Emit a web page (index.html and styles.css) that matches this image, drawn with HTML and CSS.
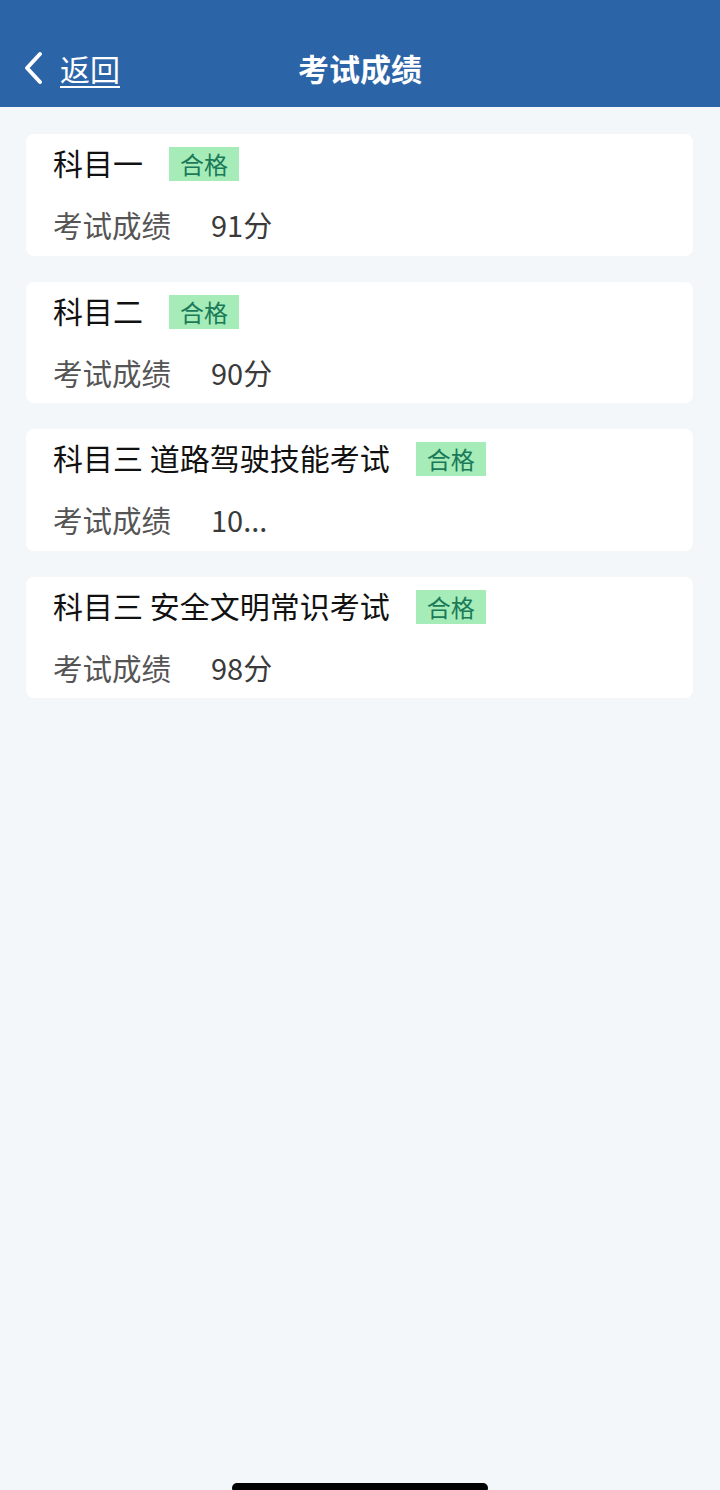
FILE: index.html
```html
<!DOCTYPE html>
<html lang="zh-CN">
<head>
    <meta charset="UTF-8">
    <meta name="viewport" content="width=device-width, initial-scale=1.0">
    <title>考试成绩</title>
    <link rel="stylesheet" href="styles.css">
</head>
<body>
    <!-- Top bar -->
    <header class="top-bar">
        <a href="#" class="back-link">
            <svg class="back-icon" width="22" height="34" viewBox="0 0 22 34">
                <path d="M18 3 L5 17 L18 31" fill="none" stroke="#fff" stroke-width="4" stroke-linecap="round" stroke-linejoin="round"/>
            </svg>
            <span class="back-text">返回</span>
        </a>
        <h1 class="page-title">考试成绩</h1>
    </header>

    <main class="score-list">
        <div class="score-card">
            <div class="card-head">
                <span class="subject">科目一</span>
                <span class="pass-tag">合格</span>
            </div>
            <div class="card-row">
                <span class="row-label">考试成绩</span>
                <span class="row-value">91分</span>
            </div>
        </div>

        <div class="score-card">
            <div class="card-head">
                <span class="subject">科目二</span>
                <span class="pass-tag">合格</span>
            </div>
            <div class="card-row">
                <span class="row-label">考试成绩</span>
                <span class="row-value">90分</span>
            </div>
        </div>

        <div class="score-card">
            <div class="card-head">
                <span class="subject">科目三 道路驾驶技能考试</span>
                <span class="pass-tag">合格</span>
            </div>
            <div class="card-row">
                <span class="row-label">考试成绩</span>
                <span class="row-value">10...</span>
            </div>
        </div>

        <div class="score-card">
            <div class="card-head">
                <span class="subject">科目三 安全文明常识考试</span>
                <span class="pass-tag">合格</span>
            </div>
            <div class="card-row">
                <span class="row-label">考试成绩</span>
                <span class="row-value">98分</span>
            </div>
        </div>
    </main>

    <div class="home-indicator"></div>
</body>
</html>
```

FILE: styles.css
```css
html, body {
    height: 100%;
}

body {
    margin: 0;
    padding: 0;
    background-color: #f3f7f9;
    font-family: "Noto Sans CJK SC", "Noto Sans", sans-serif;
    position: relative;
    overflow: hidden;
}

.top-bar {
    height: 107px;
    background-color: #2c64a8;
    display: flex;
    align-items: flex-end;
    justify-content: center;
    position: relative;
    box-sizing: border-box;
    padding-bottom: 19px;
}

.back-link {
    position: absolute;
    left: 22px;
    bottom: 21px;
    display: flex;
    align-items: center;
    color: #fff;
    text-decoration: none;
}

.back-icon {
    display: block;
    margin-right: 16px;
}

.back-text {
    font-size: 30px;
    line-height: 36px;
    text-decoration: underline;
    text-underline-offset: 5px;
    text-decoration-thickness: 2px;
}

.page-title {
    margin: 0;
    font-size: 31px;
    line-height: 40px;
    font-weight: bold;
    color: #fff;
}

.score-list {
    padding: 27px 27px 0 26px;
    display: flex;
    flex-direction: column;
    gap: 26px;
}

.score-card {
    background-color: #fff;
    border-radius: 8px;
    padding: 11px 26px 14.5px 27px;
    display: flex;
    flex-direction: column;
    gap: 28px;
}

.card-head {
    display: flex;
    align-items: center;
    gap: 26px;
    height: 34px;
}

.subject {
    font-size: 30px;
    color: #111;
    line-height: 34px;
}

.pass-tag {
    background-color: #a6ecb8;
    color: #1a7a58;
    font-size: 24px;
    line-height: 34px;
    padding: 0 11px;
    margin-top: 4px;
}

.card-row {
    display: flex;
    align-items: center;
    height: 34px;
}

.row-label {
    font-size: 29.5px;
    color: #555;
    line-height: 34px;
    margin-right: 40px;
}

.row-value {
    font-size: 29px;
    color: #3a3a3a;
    line-height: 34px;
    white-space: nowrap;
}

.home-indicator {
    position: absolute;
    left: 232px;
    bottom: -3px;
    width: 256px;
    height: 10px;
    border-radius: 5px;
    background-color: #000;
}
```
